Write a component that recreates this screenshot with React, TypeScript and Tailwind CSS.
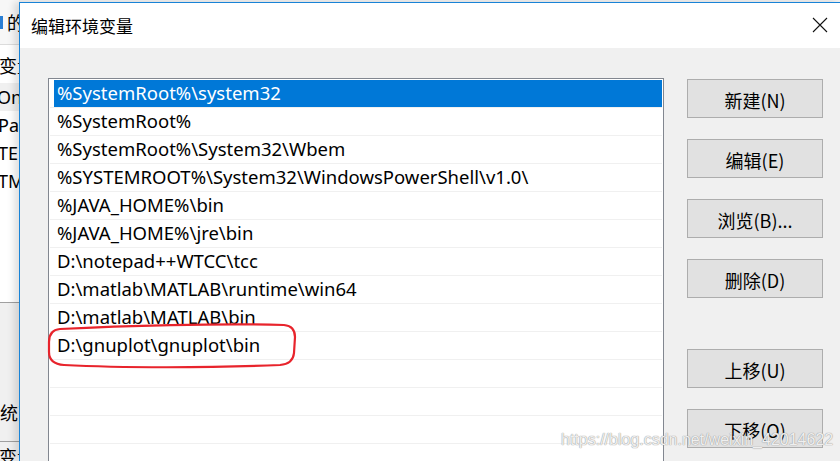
import React from "react";

const entries = [
  "%SystemRoot%\\system32",
  "%SystemRoot%",
  "%SystemRoot%\\System32\\Wbem",
  "%SYSTEMROOT%\\System32\\WindowsPowerShell\\v1.0\\",
  "%JAVA_HOME%\\bin",
  "%JAVA_HOME%\\jre\\bin",
  "D:\\notepad++WTCC\\tcc",
  "D:\\matlab\\MATLAB\\runtime\\win64",
  "D:\\matlab\\MATLAB\\bin",
  "D:\\gnuplot\\gnuplot\\bin",
  "",
  "",
  "",
  "",
];

const cjk = { fontFamily: '"Noto Sans CJK SC", "Noto Sans", sans-serif' };
const latin = { fontFamily: '"Noto Sans", "Noto Sans CJK SC", sans-serif' };

function Btn({ label, className = "" }: { label: string; className?: string }) {
  return (
    <div
      className={`h-[39px] w-[136px] shrink-0 bg-[#e1e1e1] border border-[#adadad] flex items-center justify-center text-[18px] leading-none text-black ${className}`}
      style={cjk}
    >
      <span className="mt-[2px]">{label}</span>
    </div>
  );
}

export default function App() {
  return (
    <div className="relative w-[840px] h-[461px] overflow-hidden bg-[#f0f0f0] flex" style={latin}>
      {/* background window fragment */}
      <div className="w-[19px] shrink-0 h-full flex flex-col overflow-hidden text-[18px] text-black leading-none">
        <div className="h-[45px] shrink-0 bg-[#f7f7f7] flex items-center border-b border-[#dcdcdc]">
          <div className="w-[3px] h-[13px] bg-[#2a7fd4] mr-[4px] shrink-0" />
          <span className="whitespace-nowrap" style={cjk}>的</span>
        </div>
        <div className="h-[257px] shrink-0 bg-white flex flex-col">
          <div className="h-[38px] shrink-0 flex items-center whitespace-nowrap pt-[2px]" style={cjk}>
            <span className="ml-[-1px]">变量</span>
          </div>
          <div className="h-[28px] shrink-0 bg-[#f0f0f0] flex items-center whitespace-nowrap">
            <span className="ml-[-3px]">OneDrive</span>
          </div>
          <div className="h-[28px] shrink-0 flex items-center whitespace-nowrap">
            <span className="ml-[-2px]">Path</span>
          </div>
          <div className="h-[28px] shrink-0 flex items-center whitespace-nowrap">
            <span className="ml-[-2px]">TEMP</span>
          </div>
          <div className="h-[28px] shrink-0 flex items-center whitespace-nowrap">
            <span className="ml-[-2px]">TMP</span>
          </div>
        </div>
        <div className="h-[139px] shrink-0 bg-[#f0f0f0] border-t border-[#a0a0a0] flex flex-col justify-end">
          <div className="h-[34px] flex items-center whitespace-nowrap mb-[12px]" style={cjk}>
            <span className="ml-[-18px]">系统变量</span>
          </div>
        </div>
        <div className="h-[20px] shrink-0 bg-[#f0f0f0] border-t border-[#a0a0a0] whitespace-nowrap pt-[5px]" style={cjk}>
          <span className="ml-[-1px]">变量</span>
        </div>
      </div>

      {/* dialog */}
      <div className="flex-1 mt-[2px] border-l border-t border-[#1883d7] flex flex-col shadow-[-5px_0_7px_rgba(0,0,0,0.12)] z-10 overflow-hidden">
        <div className="h-[45px] shrink-0 bg-white flex items-center justify-between pl-[11px] pr-[12px]">
          <span className="text-[17px] text-black leading-none" style={cjk}>
            编辑环境变量
          </span>
          <svg width="16" height="16" viewBox="0 0 16 16" className="mb-[1px]">
            <path d="M1 1 L15 15 M15 1 L1 15" stroke="#111" strokeWidth="1.1" fill="none" />
          </svg>
        </div>
        <div className="flex-1 min-h-0 bg-[#f0f0f0] flex pl-[28px] pt-[30px] overflow-hidden">
          <div className="w-[616px] shrink-0 self-start border border-b-0 border-[#828790] bg-white pt-[1px] px-[1px]">
            {entries.map((e, i) => (
              <div key={i} className="h-[28px] border-b border-[#f0f0f0]">
                <div
                  className={`h-[27px] ml-[4px] pl-[3px] flex items-center whitespace-nowrap text-[18.5px] leading-none ${
                    i === 0 ? "bg-[#0078d7] text-white" : "text-black"
                  }`}
                >
                  {e}
                </div>
              </div>
            ))}
          </div>
          <div className="ml-[23px] pt-[1px] flex flex-col self-start">
            <Btn label="新建(N)" />
            <Btn label="编辑(E)" className="mt-[21px]" />
            <Btn label="浏览(B)..." className="mt-[21px]" />
            <Btn label="删除(D)" className="mt-[21px]" />
            <Btn label="上移(U)" className="mt-[51px]" />
            <Btn label="下移(O)" className="mt-[21px]" />
          </div>
        </div>
      </div>

      {/* red annotation */}
      <svg
        className="absolute left-0 top-0 pointer-events-none z-20"
        width="840"
        height="461"
        viewBox="0 0 840 461"
      >
        <path
          d="M60 329 C120 326 220 323 284 325 Q295 326 295 337 L294 353 Q293 364 280 365 C210 368 120 368 64 365 Q49 364 49 352 L49 342 Q49 330 60 329 Z"
          fill="none"
          stroke="#e8242c"
          strokeWidth="2.2"
        />
      </svg>

      {/* watermark */}
      <div
        className="absolute left-[561px] top-[432px] z-20 text-[16px] leading-none whitespace-nowrap text-[rgba(255,255,255,0.85)] [text-shadow:0_0_1px_#9a9a9a,0_0_1px_#9a9a9a]"
        style={{ fontFamily: '"Liberation Sans", Arial, sans-serif' }}
      >
        https://blog.csdn.net/weixin_42014622
      </div>
    </div>
  );
}
